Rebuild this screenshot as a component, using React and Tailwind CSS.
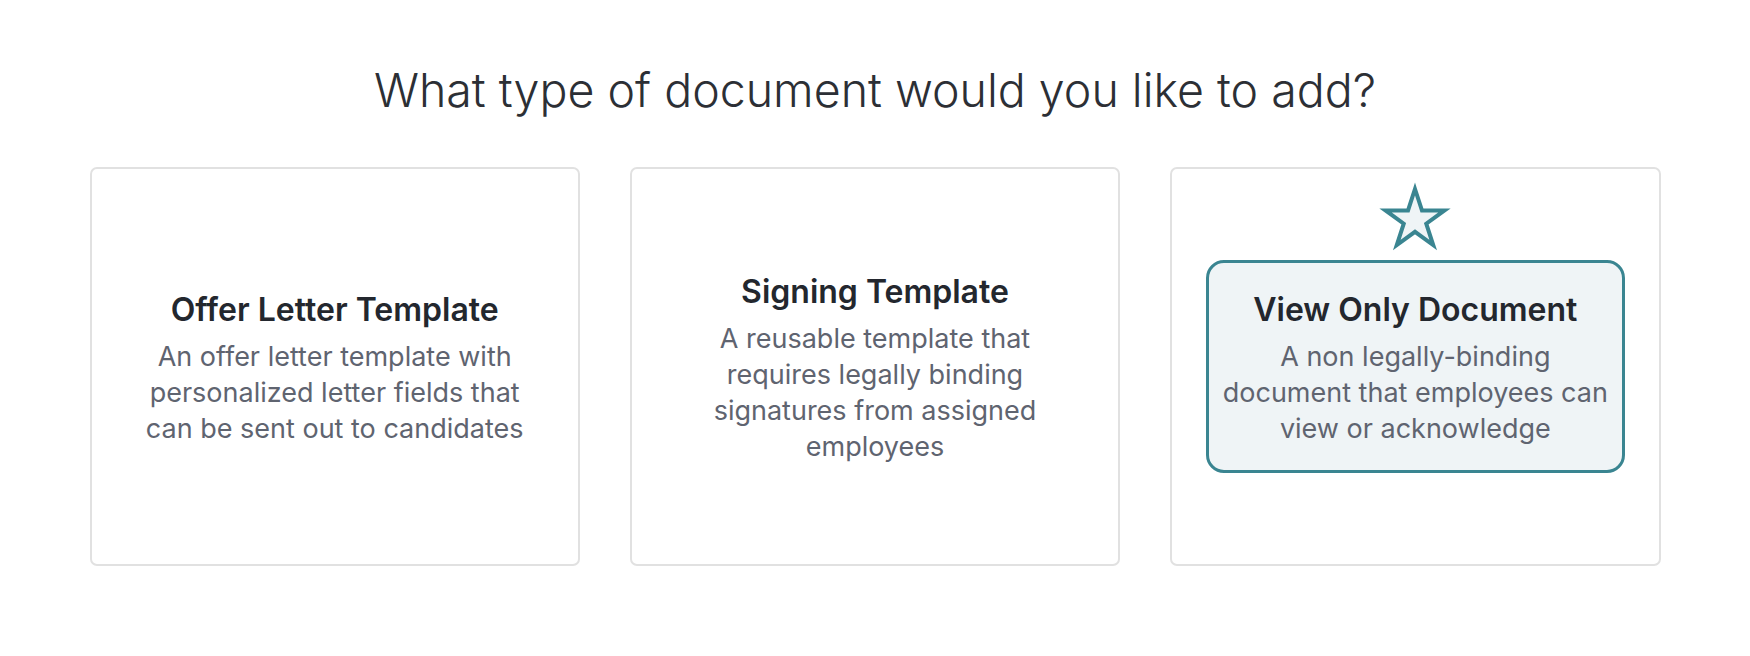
import React from "react";

const docTypes = [
    {
        id: "offer",
        title: "Offer Letter Template",
        lines: ["An offer letter template with", "personalized letter fields that", "can be sent out to candidates"],
    },
    {
        id: "signing",
        title: "Signing Template",
        lines: ["A reusable template that", "requires legally binding", "signatures from assigned", "employees"],
    },
    {
        id: "view",
        title: "View Only Document",
        lines: ["A non legally-binding", "document that employees can", "view or acknowledge"],
        selected: true,
    },
];

function Star() {
    return (
        <svg width="76" height="72" viewBox="0 0 76 72" className="absolute left-1/2 -translate-x-1/2 bottom-full mb-[9px]">
            <path
                d="M38 7 L44.96 28.42 L67.48 28.42 L49.26 41.66 L56.22 63.08 L38 49.84 L19.78 63.08 L26.74 41.66 L8.52 28.42 L31.04 28.42 Z"
                fill="#eff4f6"
                stroke="#3a8591"
                strokeWidth="4"
                strokeLinejoin="miter"
            />
        </svg>
    );
}

function CardText({ title, lines }) {
    return (
        <div className="pt-[5px] text-center">
            <h2 className="text-[32px] leading-[36px] font-semibold text-[#23272e]">{title}</h2>
            <p className="mt-[11px] text-[27px] leading-[36px] text-[#5f6470]">
                {lines.map((line, i) => (
                    <span key={i} className="block">{line}</span>
                ))}
            </p>
        </div>
    );
}

function DocCard({ doc }) {
    return (
        <button className="h-[399px] flex items-center justify-center bg-white border-2 border-[#e1e1e1] rounded-[7px]">
            {doc.selected ? (
                <div className="relative w-[419px] pt-[24px] pb-[23px] border-[3px] border-[#3a8591] bg-[#eff4f6] rounded-[18px]">
                    <Star />
                    <CardText title={doc.title} lines={doc.lines} />
                </div>
            ) : (
                <CardText title={doc.title} lines={doc.lines} />
            )}
        </button>
    );
}

export default function App() {
    return (
        <div className="min-h-[656px] bg-white pt-[62px]" style={{ fontFamily: "Inter, 'Noto Sans', sans-serif" }}>
            <h1 className="text-center text-[46.5px] leading-[56px] font-light text-[#2c2f35]">
                What type of document would you like to add?
            </h1>
            <div className="w-[1571px] mx-auto mt-[49px] grid grid-cols-3 gap-[50px]">
                {docTypes.map((doc) => (
                    <DocCard key={doc.id} doc={doc} />
                ))}
            </div>
        </div>
    );
}
